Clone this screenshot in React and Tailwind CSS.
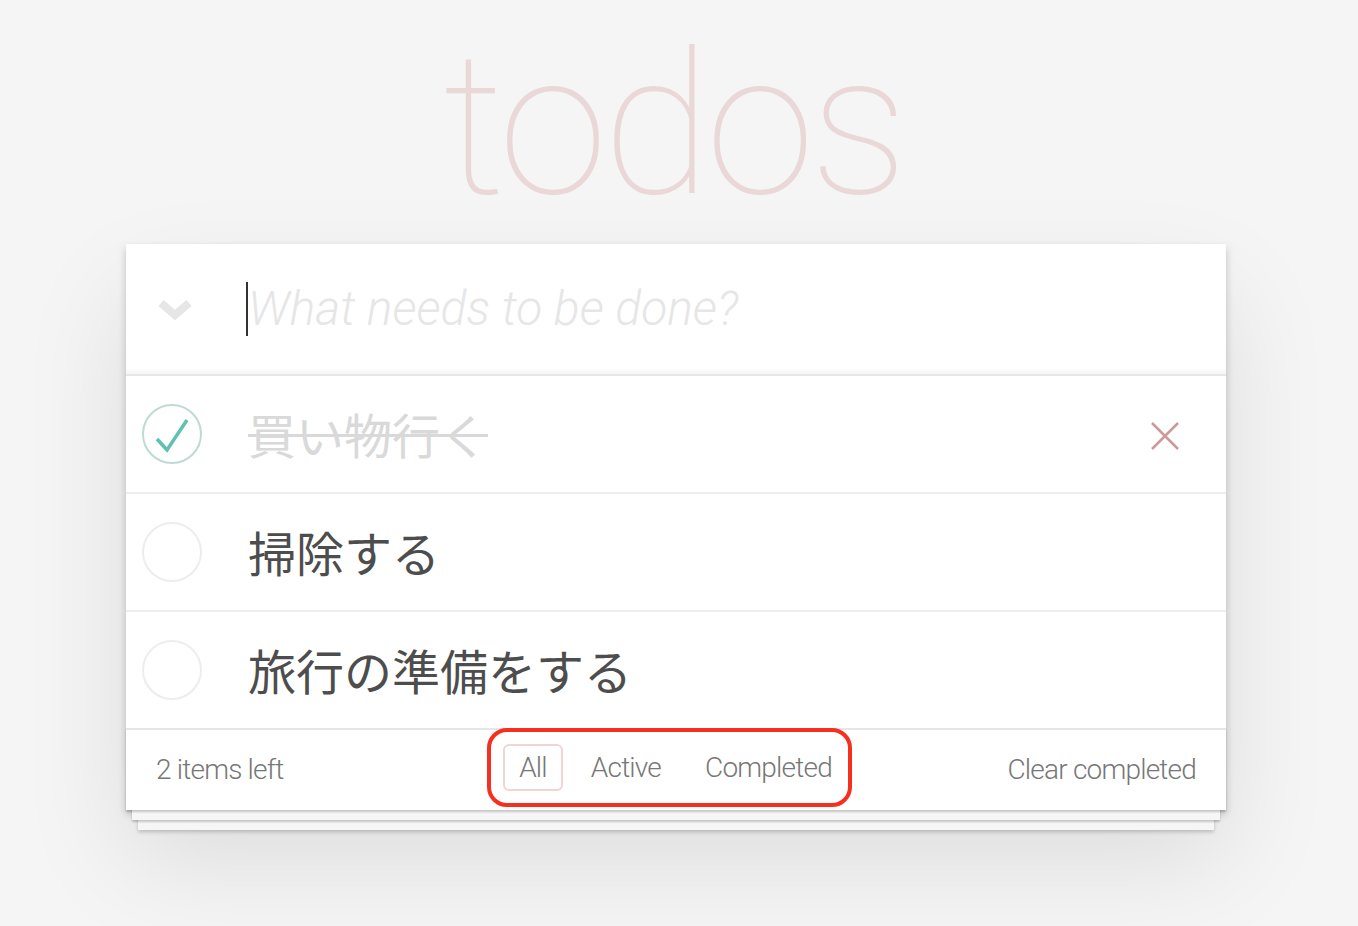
import React from 'react'

const todos = [
  { id: 1, title: '買い物行く', completed: true },
  { id: 2, title: '掃除する', completed: false },
  { id: 3, title: '旅行の準備をする', completed: false },
]

const Toggle = ({ checked }) => (
  <svg width="60" height="60" viewBox="0 0 60 60" className="shrink-0">
    <circle cx="30" cy="30" r="29" fill="none" stroke={checked ? '#bddad5' : '#ededed'} strokeWidth="2" />
    {checked && (
      <polyline points="15,35 25,46 45,16" fill="none" stroke="#5dc2af" strokeWidth="3.5" />
    )}
  </svg>
)

const App = () => {
  return (
    <div className="min-h-screen bg-[#f5f5f5] pt-[26px] font-['Roboto','Noto_Sans_CJK_JP',sans-serif]">
      <div className="w-[1100px] ml-[126px]">

        {/* Title */}
        <h1 className="text-center text-[198px] leading-none font-thin tracking-[-5px] text-[rgba(175,47,47,0.15)] mb-[20px] pr-[6px]">
          todos
        </h1>

        <section className="bg-white shadow-[0_4px_8px_0_rgba(0,0,0,0.2),0_50px_100px_0_rgba(0,0,0,0.1)]">

          {/* New todo */}
          <div className="flex items-center h-[130px] shadow-[inset_0_-4px_2px_rgba(0,0,0,0.03)]">
            <div className="w-[120px] pl-[32px] pt-[4px]">
              <svg width="34" height="24" viewBox="0 0 34 24">
                <polyline points="3,4 17,16 31,4" fill="none" stroke="#e6e6e6" strokeWidth="8" />
              </svg>
            </div>
            <div className="flex items-center h-[54px]">
              <span className="w-[2px] h-[54px] bg-[#333]"></span>
              <span className="text-[48px] italic font-light text-[#e6e6e6] leading-none">What needs to be done?</span>
            </div>
          </div>

          {/* List */}
          <ul className="border-t-2 border-[#e6e6e6]">
            {todos.map((todo, i) => (
              <li
                key={todo.id}
                className={
                  i < todos.length - 1
                    ? 'flex items-center h-[118px] pl-[16px] pr-[46px] border-b-2 border-[#ededed]'
                    : 'flex items-center h-[116px] pl-[16px] pr-[46px]'
                }
              >
                <Toggle checked={todo.completed} />
                <span
                  className={`ml-[46px] flex-1 text-[48px] leading-[1.2] font-['Noto_Sans_CJK_JP',sans-serif] ${
                    todo.completed ? 'text-[#d9d9d9] line-through decoration-[3px]' : 'text-[#4d4d4d]'
                  }`}
                >
                  {todo.title}
                </span>
                {todo.completed && (
                  <svg width="30" height="30" viewBox="0 0 30 30" className="mt-[4px]">
                    <path d="M2 2 L28 28 M28 2 L2 28" stroke="#cc9a9a" strokeWidth="2.5" />
                  </svg>
                )}
              </li>
            ))}
          </ul>

          {/* Footer */}
          <footer className="flex items-center h-[82px] px-[30px] border-t-2 border-[#e6e6e6] text-[28px] font-light tracking-[-0.8px] text-[#777] shadow-[0_2px_2px_rgba(0,0,0,0.2),0_16px_0_-6px_#f6f6f6,0_18px_2px_-6px_rgba(0,0,0,0.2),0_32px_0_-12px_#f6f6f6,0_34px_4px_-12px_rgba(0,0,0,0.2)]">
            <span className="flex-1">2 items left</span>
            <ul className="flex items-center border-4 border-[#f5301e] rounded-[20px] pl-[6px] py-[6px] mr-[13px] -mt-[6px]">
              <li className="m-[6px]">
                <span className="block px-[14px] py-[4px] leading-[35px] border-2 border-[rgba(175,47,47,0.2)] rounded-[6px]">All</span>
              </li>
              <li className="m-[6px]">
                <span className="block px-[14px] py-[4px] leading-[35px] border-2 border-transparent">Active</span>
              </li>
              <li className="my-[6px] ml-[6px]">
                <span className="block px-[14px] py-[4px] leading-[35px] border-2 border-transparent">Completed</span>
              </li>
            </ul>
            <span className="flex-1 text-right">Clear completed</span>
          </footer>

        </section>
      </div>
    </div>
  )
}

export default App
